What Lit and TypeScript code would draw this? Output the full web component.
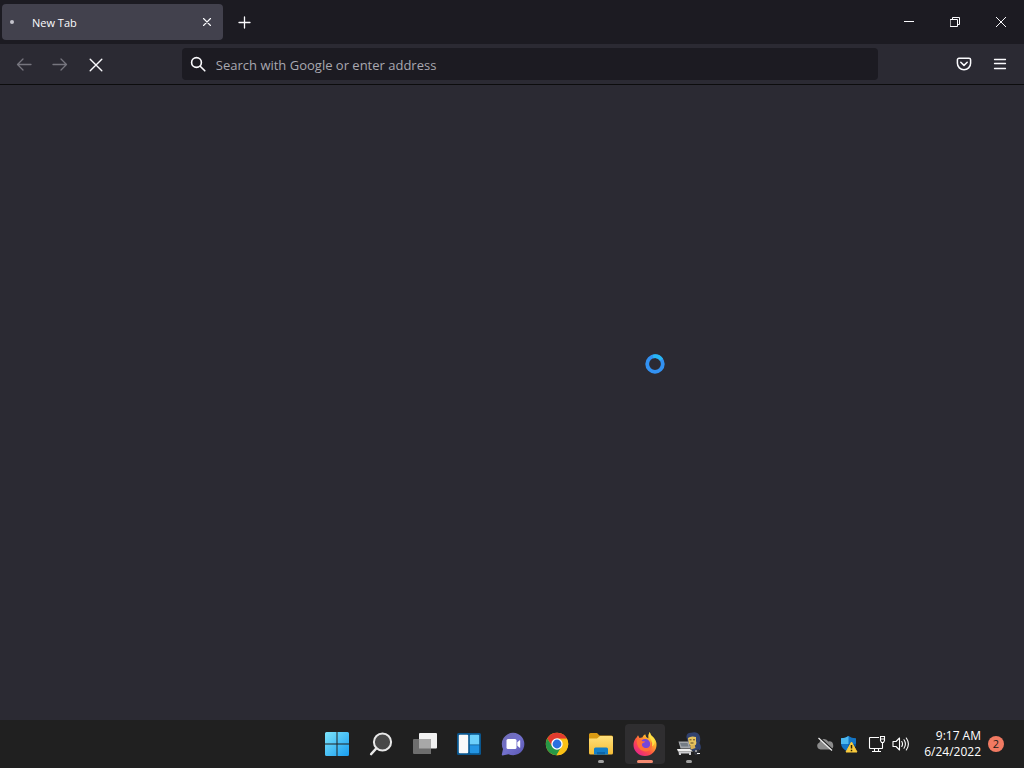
import { LitElement, html, css, svg } from "lit";
import { customElement } from "lit/decorators.js";

const base = css`
  * { box-sizing: border-box; }
  button {
    display: flex;
    align-items: center;
    justify-content: center;
    padding: 0;
    border: 0;
    background: none;
    color: inherit;
    font: inherit;
  }
  svg { display: block; flex: none; }
`;

const line = (size: number, body: unknown, width = 1.3) => html`
  <svg width=${size} height=${size} viewBox="0 0 ${size} ${size}" fill="none" stroke="currentColor"
    stroke-width=${width} stroke-linecap="round" stroke-linejoin="round" aria-hidden="true">${body}</svg>`;

@customElement("browser-tabs")
class BrowserTabs extends LitElement {
  static styles = [base, css`
    :host { display: flex; height: 44px; background: #1c1b22; color: #fbfbfe; padding-left: 2px; }
    .tab {
      display: flex; align-items: center; width: 221px; height: 36px; margin-top: 4px;
      padding: 0 4px 0 8px; border-radius: 4px; background: #42414d; font-size: 11px;
    }
    .dot { width: 4px; height: 4px; border-radius: 50%; background: #c4c3cc; }
    .label { flex: 1; padding: 2px 0 0 18px; line-height: 16px; }
    .close { width: 24px; height: 24px; }
    .new { width: 32px; height: 44px; margin-left: 5px; }
    .controls { display: flex; margin-left: auto; }
    .controls button { width: 46px; height: 44px; }
  `];
  render() {
    return html`
      <div class="tab">
        <span class="dot"></span><span class="label">New Tab</span>
        <button class="close" aria-label="Close tab">${line(10, svg`<path d="M1.5 1.5l7 7M8.5 1.5l-7 7"/>`, 1.1)}</button>
      </div>
      <button class="new" aria-label="Open a new tab">${line(13, svg`<path d="M6.5 1v11M1 6.5h11"/>`, 1.3)}</button>
      <div class="controls">
        <button aria-label="Minimize">${line(10, svg`<path d="M0 4.5h10" stroke-linecap="butt"/>`, 1)}</button>
        <button aria-label="Restore">
          ${line(10, svg`<path stroke-linejoin="miter" d="M.5 2.5h7v7h-7zM2.5 2.5v-2h7v7h-2"/>`, 1)}
        </button>
        <button aria-label="Close">${line(10, svg`<path d="M.2 .2l9.6 9.6M9.8 .2l-9.6 9.6"/>`, 1)}</button>
      </div>`;
  }
}

@customElement("browser-toolbar")
class BrowserToolbar extends LitElement {
  static styles = [base, css`
    :host {
      display: flex; align-items: center; gap: 4px; height: 41px; padding: 0 8px;
      background: #2b2a33; color: #fbfbfe; border-bottom: 1px solid #0c0c0d;
    }
    button { width: 32px; height: 32px; flex: none; }
    .off { color: #76757e; }
    .spring { flex: 1; }
    .field {
      flex: 11; display: flex; align-items: center; gap: 10px; height: 32px;
      padding: 0 8px; border-radius: 4px; background: #1c1b22;
    }
    input {
      flex: 1; min-width: 0; height: 24px; padding: 2px 0 0; border: 0; outline: 0; background: none;
      color: #fbfbfe; font: inherit; font-size: 13px;
    }
    input::placeholder { color: #a9a8b0; opacity: 1; }
  `];
  render() {
    return html`
      <button class="off" aria-label="Back" disabled>${line(16, svg`<path d="M15 8.5H1.5M7 3L1.5 8.500L7 14"/>`)}</button>
      <button class="off" aria-label="Forward" disabled>${line(16, svg`<path d="M1 8.500h13.500M9 3L14.500 8.500L9 14"/>`)}</button>
      <button aria-label="Stop">${line(16, svg`<path d="M2.200 3.200l11.600 11.600M13.800 3.200L2.200 14.800"/>`, 1.4)}</button>
      <span class="spring"></span>
      <label class="field">
        ${line(16, svg`<circle cx="6.500" cy="6.500" r="4.900"/><path d="M10.200 10.200l4.600 4.600"/>`, 1.6)}
        <input type="text" aria-label="Address" placeholder="Search with Google or enter address" />
      </label>
      <span class="spring"></span>
      <button aria-label="Save to Pocket">
        ${line(16, svg`<path d="M3 2.2h10a1.6 1.6 0 0 1 1.6 1.6v3.400a6.600 6.600 0 0 1-13.200 0V3.800a1.600 1.600 0 0 1 1.600-1.600z"/><path d="M4.800 6.300L8 9.400l3.200-3.100"/>`, 1.5)}
      </button>
      <button aria-label="Open application menu">
        ${line(14, svg`<path d="M1.500 2.500h11M1.500 6.500h11M1.500 11.500h11"/>`, 1.3)}
      </button>`;
  }
}

const apps = [
  { name: "Start", art: svg`
    <defs><linearGradient id="win" x1="0" y1="0" x2="1" y2="1"><stop stop-color="#7de4fb"/><stop offset="1" stop-color="#189df0"/></linearGradient></defs>
    <path fill="url(#win)" d="M1.500 0H11.500V11.500H0V1.500Q0 0 1.500 0zM12.500 0H22.500Q24 0 24 1.500V11.500H12.500zM0 12.500H11.500V24H1.500Q0 24 0 22.500zM12.500 12.500H24V22.500Q24 24 22.500 24H12.500z"/>` },
  { name: "Search", art: svg`
    <circle cx="13.500" cy="10" r="8.600" fill="#484848" stroke="#e8e8e8" stroke-width="2"/>
    <path d="M7.200 16.500L2.200 22" stroke="#e8e8e8" stroke-width="2.600" stroke-linecap="round"/>` },
  { name: "Task view", art: svg`
    <rect x="6" y="1" width="18" height="15.500" rx="1" fill="#f1f1f1"/>
    <path d="M1 7H17Q18 7 18 8V22H1Q0 22 0 21V8Q0 7 1 7z" fill="#6e6e6e"/>
    <path d="M6 7H17Q18 7 18 8V16.500H6z" fill="#a8a8a8"/>` },
  { name: "Widgets", art: svg`
    <rect x="0" y="1" width="24" height="22" rx="1.500" fill="#0a578f"/>
    <rect x="1.800" y="2.800" width="9.400" height="18.400" rx="1" fill="#fafafa"/>
    <path d="M13.800 2.800H21.200Q22.200 2.800 22.200 3.800V12.500H12.800V3.800Q12.800 2.800 13.800 2.800z" fill="#6dd0fb"/>
    <path d="M12.800 13.200H22.200V20.200Q22.200 21.200 21.200 21.200H13.800Q12.800 21.200 12.800 20.200z" fill="#2496e4"/>` },
  { name: "Chat", art: svg`
    <defs><linearGradient id="chat" x1="0" y1="0" x2="1" y2="1"><stop stop-color="#6f6ab0"/><stop offset=".5" stop-color="#7270cc"/><stop offset="1" stop-color="#5956b4"/></linearGradient></defs>
    <path d="M12.200 .8A11.200 11.200 0 1 1 7.500 22.200L1.500 23.500Q.7 23.500 .8 22.600L2 17A11.200 11.200 0 0 1 12.200 .8z" fill="url(#chat)"/>
    <rect x="5.500" y="7" width="10" height="10" rx="1.500" fill="#fff"/>
    <path d="M16.300 10.200L18.600 8.300Q19.200 7.900 19.200 8.700V15.300Q19.200 16.100 18.600 15.700L16.300 13.800z" fill="#fff"/>` },
  { name: "Google Chrome", art: svg`
    <circle cx="12" cy="12" r="11.200" fill="#fbc116"/>
    <path d="M12 12V6.700H21.850A11.200 11.200 0 0 0 2.300 6.400L7.400 14.650z" fill="#e33b2e"/>
    <path d="M2.300 6.400A11.200 11.200 0 0 0 11.500 23.190L16.600 14.650H7.400z" fill="#279847"/>
    <path d="M21.850 6.700H12L16.600 14.650L11.500 23.190A11.200 11.200 0 0 0 21.850 6.700z" fill="#fbc116"/>
    <circle cx="12" cy="12" r="5.700" fill="#fff"/><circle cx="12" cy="12" r="4.400" fill="#2a70df"/>` },
  { name: "File Explorer", run: "idle", art: svg`
    <defs><linearGradient id="fold" x1="0" y1="0" x2="0" y2="1"><stop stop-color="#ffe07b"/><stop offset="1" stop-color="#f5bd36"/></linearGradient></defs>
    <path d="M0 2.500Q0 1 1.500 1H8L10.500 3.500H22.500Q24 3.500 24 5V12H0z" fill="#d99a13"/>
    <path d="M0 6.500H8L11 4H22.500Q24 4 24 5.500V21Q24 22.500 22.500 22.500H1.500Q0 22.500 0 21z" fill="url(#fold)"/>
    <path d="M6.500 15.500H17.500Q19 15.500 19 17V22.500H5V17Q5 15.500 6.500 15.500z" fill="#137fc9"/>
    <path d="M8 20H16V22.500H8z" fill="#0c65a8"/>` },
  { name: "Firefox", run: "active", art: svg`
    <defs>
      <linearGradient id="fx" x1=".9" y1=".1" x2=".2" y2=".9"><stop stop-color="#fff04b"/><stop offset=".32" stop-color="#ffab2c"/><stop offset=".65" stop-color="#ff5142"/><stop offset="1" stop-color="#e82784"/></linearGradient>
    </defs>
    <path d="M3.800 5.300L5 3.200L6.500 6Q8 5.400 9.300 5.500Q10.200 3.200 12.200 2.200Q12.500 5 15.300 6.500Q14.800 2.500 16.700 0Q17.200 3 20 5Q23.700 8.300 23.500 13A11.500 11 0 0 1 .5 13Q.6 8.200 3.800 5.300z" fill="url(#fx)"/>
    <circle cx="12.200" cy="12" r="5" fill="#7646da"/>
    <path d="M3.600 7.200Q7.500 6.500 9.400 9.200L12.400 9.600Q11.800 10.900 9.500 11.200Q8 13.500 10.500 15.200Q13.500 17 16.500 15Q18.800 12 17.200 8.500Q20 11 18.800 15.500Q16.500 20 11 19.300Q3.500 17.500 3.600 7.200z" fill="#ff7038"/>
    <path d="M16.700 0Q15.600 3.700 17.500 6.900Q20.100 9.600 18.900 14.500Q23 12 21.300 7Q20.500 5.400 19.300 4.500Q17.300 3 16.700 0z" fill="#ffdf43"/>` },
  { name: "Sandbox agent", run: "idle", art: svg`
    <path d="M9.500 5.500Q9 1 14 .8Q20 -1 22.500 3.500Q24 7 22.500 11Q25 15 23 18L18 20L13 17z" fill="#31426f"/>
    <path d="M11 6Q14 3.500 19 5V9Q20.500 13 16 14.500Q12 14 11.500 10z" fill="#e8c45f"/>
    <path d="M12.500 7.800h2M16 7.800h2M13.500 11h3" stroke="#5b4928"/>
    <path d="M1.500 9.500H11.500L13.500 16.500H3.500z" fill="#a3a6aa"/><path d="M3 11H10.500L11.500 14.500H4.500z" fill="#747c85"/>
    <path d="M0 17H13L16 19.500H1z" fill="#f0f0f0"/><path d="M1.500 19.500H14V23H12V21.500H4V23H2z" fill="#cdcdd0"/>
    <path d="M13 14L17.500 12.500L18.500 16L14 17.500z" fill="#d8b156"/><path d="M16 19L22 17L21.500 23H18z" fill="#30333b"/>
    <path d="M18 19h2M20 21.500h3" stroke="#f1f1f1"/>` },
];

@customElement("task-bar")
class TaskBar extends LitElement {
  static styles = [base, css`
    :host {
      display: grid; grid-template-columns: 1fr auto 1fr; align-items: center; height: 48px;
      padding-left: 2px; background: #202020; color: #fff;
    }
    .apps { grid-column: 2; display: flex; gap: 4px; }
    .app { position: relative; width: 40px; height: 40px; border-radius: 4px; }
    .active { background: #2f2e30; }
    .idle::after, .active::after {
      content: ""; position: absolute; bottom: 1px; left: 17px; width: 6px; height: 3px;
      border-radius: 2px; background: #a0a0a0;
    }
    .active::after { left: 12px; width: 16px; background: #f58b72; }
    .tray { display: flex; align-items: center; justify-self: end; padding-right: 20px; }
    .icons { display: flex; gap: 10px; padding-right: 14px; }
    .pair { display: flex; gap: 6px; }
    .clock { font-size: 12px; line-height: 16px; text-align: right; }
    .clock time { display: block; }
    .badge {
      width: 16px; height: 16px; margin-left: 7px; border-radius: 50%;
      background: #f17a62; color: #201a18; font-size: 11px; line-height: 16px;
    }
  `];
  render() {
    return html`
      <nav class="apps" aria-label="Apps">
        ${apps.map(a => html`<button class="app ${a.run ?? ""}" aria-label=${a.name}>
          <svg width="24" height="24" viewBox="0 0 24 24" fill="none" aria-hidden="true">${a.art}</svg>
        </button>`)}
      </nav>
      <div class="tray">
        <div class="icons">
          <div class="pair">
            <svg width="18" height="18" viewBox="0 0 18 18" aria-hidden="true">
              <path d="M4.500 14.500A3.700 3.700 0 0 1 3.500 7.400A4.800 4.800 0 0 1 12.300 6.500A3.900 3.900 0 0 1 14 14.500z" fill="#8c8c8c"/>
              <path d="M3.500 2.500L17 15" stroke="#202020" stroke-width="1.500"/><path d="M2.500 3L16 15.500" stroke="#f1f1f1" stroke-width="1.200"/>
            </svg>
            <svg width="18" height="18" viewBox="0 0 18 18" aria-hidden="true">
              <path d="M8.500 1Q11.500 3.300 16 3.300V8Q16 14 8.500 17Q1 14 1 8V3.300Q5.500 3.300 8.500 1z" fill="#1475c5"/>
              <path d="M8.500 1V9H1V3.300Q5.500 3.300 8.500 1z" fill="#4cb8ef"/><path d="M8.500 9H16Q15.500 14 8.500 17z" fill="#0b539b"/>
              <path d="M11.500 7L17 17H6z" fill="#fbcb3c" stroke="#fbcb3c" stroke-linejoin="round"/>
              <path d="M11.500 10v3.500M11.500 14.800v1.500" stroke="#2b2100" stroke-width="1.500"/>
            </svg>
          </div>
          <div class="pair">
            <svg width="18" height="18" viewBox="0 0 18 18" fill="none" stroke="#fff" aria-hidden="true">
              <path d="M11 2.500H2Q1.500 2.500 1.500 3V12.500Q1.500 13.500 2.500 13.500H14Q14.500 13.500 14.500 13V8M6.500 13.500V16.500M10.500 13.500V16.500M4 16.500H13M12.500 1.500H16.500V5.500L15.500 7.500H13.500L12.500 5.500zM12.500 4H16.500" stroke-width="1.100"/>
            </svg>
            <svg width="18" height="18" viewBox="0 0 18 18" fill="none" stroke="#fff" stroke-linecap="round" stroke-linejoin="round" aria-hidden="true">
              <path d="M1 6.500H4L7.500 3V15L4 11.500H1zM9.800 6.500Q11.200 9 9.800 11.500M12 4.800Q14.800 9 12 13.200M14.300 3Q18.500 9 14.300 15" stroke-width="1.100"/>
            </svg>
          </div>
        </div>
        <div class="clock"><time>9:17 AM</time><time>6/24/2022</time></div>
        <button class="badge" aria-label="2 notifications">2</button>
      </div>`;
  }
}

@customElement("app-root")
class AppRoot extends LitElement {
  static styles = [base, css`
    :host {
      display: flex; flex-direction: column; min-height: 100vh; background: #2b2a33;
      font-family: "Open Sans", "Noto Sans", sans-serif;
    }
    main { position: relative; flex: 1; }
    .busy { position: absolute; left: 645px; top: 269px; }
  `];
  render() {
    return html`
      <browser-tabs></browser-tabs>
      <browser-toolbar></browser-toolbar>
      <main>
        <svg class="busy" width="20" height="20" viewBox="0 0 20 20" fill="none" role="img" aria-label="Loading">
          <circle cx="10" cy="10" r="7.800" stroke="#3291f2" stroke-width="3.800"/>
          <path d="M8 2.500A7.800 7.800 0 0 1 16.500 5.700" stroke="#28b6f4" stroke-width="3.800"/>
        </svg>
      </main>
      <task-bar></task-bar>`;
  }
}
